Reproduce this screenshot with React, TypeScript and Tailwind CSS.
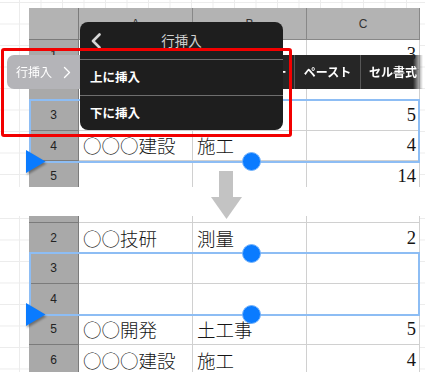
import React from "react";

type RowData = { n: string; a?: string; b?: string; c?: string };

const GRID_BG =
  "bg-[linear-gradient(to_right,#ececec_1px,transparent_1px),linear-gradient(to_bottom,#ececec_1px,transparent_1px)] bg-size-[21.5px_21.5px] bg-position-[19px_2px]";

const Row: React.FC<RowData & { h: string }> = ({ n, a, b, c, h }) => {
  return (
    <div className={`grid grid-cols-[50px_114px_114px_113px] ${h}`}>
      <div className="flex items-center justify-center bg-[#a9a9a9] border-b border-r border-[#7b7b7b] text-[12px] text-[#222] font-['Liberation_Sans',sans-serif]">
        {n}
      </div>
      <div className="flex items-center pl-[4px] bg-white border-b border-r border-[#d0d0d0] text-[18.5px] leading-none text-[#151515] whitespace-nowrap overflow-hidden font-['Noto_Sans_CJK_JP',sans-serif] font-light">
        {a}
      </div>
      <div className="flex items-center pl-[4px] bg-white border-b border-r border-[#d0d0d0] text-[18.5px] leading-none text-[#151515] whitespace-nowrap overflow-hidden font-['Noto_Sans_CJK_JP',sans-serif] font-light">
        {b}
      </div>
      <div className="flex items-center justify-end pr-[3px] bg-white border-b border-r border-[#d0d0d0] text-[18.5px] leading-none text-[#151515] font-['Liberation_Serif',serif]">
        {c}
      </div>
    </div>
  );
};

const Circle: React.FC<{ pos: string }> = ({ pos }) => (
  <div className={`absolute w-[19px] h-[19px] rounded-full bg-[#0a7bff] border-[1.5px] border-[#74b3fc] ${pos}`} />
);

const Triangle: React.FC<{ pos: string }> = ({ pos }) => (
  <svg
    className={`absolute drop-shadow-[1.5px_2px_1px_rgba(0,0,0,0.35)] ${pos}`}
    width="22"
    height="24"
    viewBox="0 0 22 24"
  >
    <polygon points="0,0 19.5,11.5 0,23" fill="#0a7bff" />
  </svg>
);

const TopPanel: React.FC = () => {
  // rows 1-3 of columns A/B sit under the popup, so only what shows is filled in
  const rows: RowData[] = [
    { n: "1", c: "3" },
    { n: "2" },
    { n: "3", c: "5" },
    { n: "4", a: "○○○建設", b: "施工", c: "4" },
    { n: "5", c: "14" },
  ];
  return (
    <div className={`relative h-[187px] overflow-hidden bg-white ${GRID_BG}`}>
      <div className="ml-[29px] mt-[8px] w-[391px]">
        <div className="grid grid-cols-[50px_114px_114px_113px] h-[32px] bg-[#b3b3b3] text-[12px] text-[#333] font-['Liberation_Sans',sans-serif]">
          <div className="border-b border-r border-[#7b7b7b]" />
          <div className="flex items-center justify-center border-b border-r border-[#888]">A</div>
          <div className="flex items-center justify-center border-b border-r border-[#888]">B</div>
          <div className="flex items-center justify-center border-b border-r border-[#888]">C</div>
        </div>
        {rows.map((r) => (
          <Row key={r.n} {...r} h="h-[30.3px]" />
        ))}
      </div>

      {/* selection */}
      <div className="absolute left-[29px] top-[99px] w-[391px] h-[64px] border-[2.5px] border-[#8dbdf4]" />
      <Circle pos="left-[242px] top-[152px]" />
      <Triangle pos="left-[26px] top-[150px]" />

      {/* edit menu bar */}
      <div className="absolute left-[7px] top-[55px] h-[34px] w-[416px] flex text-[12px] font-semibold text-white font-['Noto_Sans_CJK_JP',sans-serif] [mask-image:linear-gradient(to_right,#000_calc(100%-10px),transparent)]">
        <div className="w-[73px] flex items-center gap-[11px] pl-[9px] rounded-l-[7px] bg-[#b4b4b8] font-normal">
          <span>行挿入</span>
          <svg width="8" height="13" viewBox="0 0 8 13">
            <path d="M1.5 1.5 L6.5 6.5 L1.5 11.5" stroke="#fff" strokeWidth="1.4" fill="none" strokeLinecap="round" strokeLinejoin="round" />
          </svg>
        </div>
        <div className="w-[163px] bg-[#262626] border-r border-[#575757]" />
        <div className="w-[52px] flex items-center justify-center bg-[#262626] border-r border-[#575757]">コピー</div>
        <div className="w-[66px] flex items-center justify-center bg-[#262626] border-r border-[#575757]">ペースト</div>
        <div className="flex-1 flex items-center pl-[8px] bg-[#262626] whitespace-nowrap overflow-hidden">セル書式</div>
      </div>

      {/* submenu popup */}
      <div className="absolute left-[80px] top-[22px] w-[203px] h-[108px] flex flex-col rounded-[8px] bg-[#1e1e1e] font-['Noto_Sans_CJK_JP',sans-serif]">
        <div className="h-[38px] grid grid-cols-[1fr_auto_1fr] items-center border-b border-[#6e6e6e]">
          <svg className="ml-[10px]" width="12" height="16" viewBox="0 0 12 16">
            <path d="M9.5 1.5 L3 8 L9.5 14.5" stroke="#d6d6d6" strokeWidth="2.6" fill="none" strokeLinecap="round" strokeLinejoin="round" />
          </svg>
          <span className="text-[13.5px] text-[#cfcfcf]">行挿入</span>
          <span />
        </div>
        <div className="h-[36px] flex items-center pl-[10px] border-b border-[#6e6e6e] text-[12.5px] font-semibold text-white">
          上に挿入
        </div>
        <div className="flex-1 flex items-center pl-[10px] text-[12.5px] font-semibold text-white">下に挿入</div>
      </div>

      {/* annotation */}
      <div className="absolute left-[1px] top-[48px] w-[291px] h-[89px] border-[3px] border-[#f20000] rounded-[3px]" />
    </div>
  );
};

const BottomPanel: React.FC = () => {
  const rows: RowData[] = [
    { n: "2", a: "○○技研", b: "測量", c: "2" },
    { n: "3" },
    { n: "4" },
    { n: "5", a: "○○開発", b: "土工事", c: "5" },
    { n: "6", a: "○○○建設", b: "施工", c: "4" },
  ];
  return (
    <div className={`relative h-[156px] overflow-hidden bg-white ${GRID_BG}`}>
      <div className="ml-[29px] w-[391px]">
        <Row n="" h="h-[7px]" />
        {rows.map((r) => (
          <Row key={r.n} {...r} h="h-[30.5px]" />
        ))}
      </div>

      <div className="absolute left-[29px] top-[36px] w-[391px] h-[63.5px] border-[2.5px] border-[#8dbdf4]" />
      <Circle pos="left-[242px] top-[28px]" />
      <Circle pos="left-[242px] top-[89px]" />
      <Triangle pos="left-[26px] top-[87px]" />
    </div>
  );
};

export default function App() {
  return (
    <div className="relative w-[425px] h-[372px] overflow-hidden bg-white flex flex-col">
      <TopPanel />
      <div className="h-[29px] bg-white" />
      <BottomPanel />

      {/* down arrow */}
      <svg className="absolute left-[211px] top-[171px]" width="31" height="48" viewBox="0 0 31 48">
        <rect x="8" y="0" width="14" height="26.5" fill="#c3c3c3" />
        <polygon points="0,26 31,26 15.5,48" fill="#c3c3c3" />
      </svg>
    </div>
  );
}
